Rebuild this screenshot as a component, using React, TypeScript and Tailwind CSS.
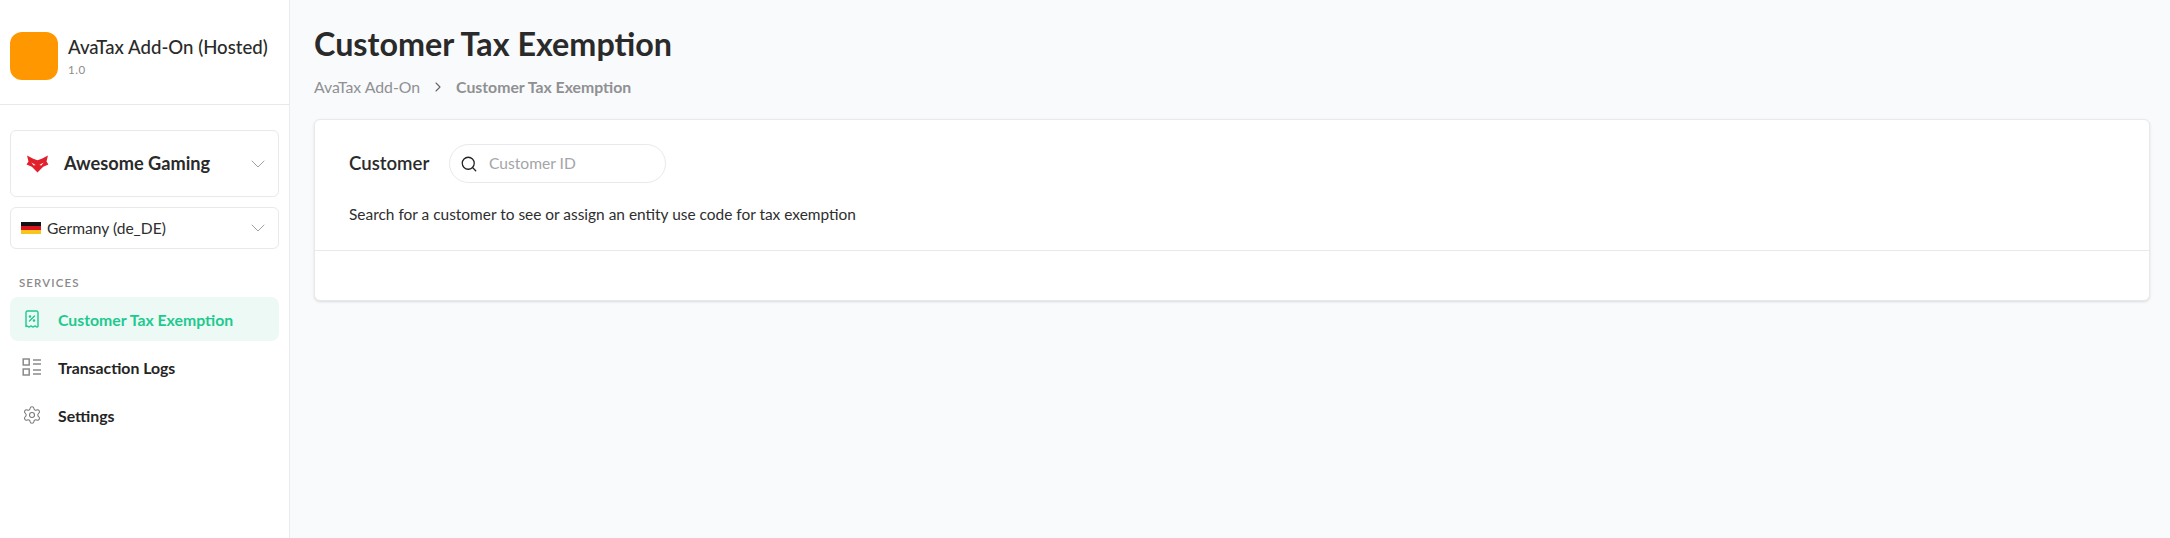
import React from "react";
import { ChevronDown, ChevronRight, Search, Settings } from "lucide-react";

function Fox() {
  return (
    <svg width="23" height="19" viewBox="0 0 24 20" className="shrink-0">
      <path d="M1 1.5 L7.5 5 L12 6.5 L16.5 5 L23 1.5 L21.5 8 L23.5 11 L18 13.5 L12 19.5 L6 13.5 L0.5 11 L2.5 8 Z" fill="#e1202c" />
      <path d="M5.5 9 L10 11.5 L8 12 Z M18.5 9 L14 11.5 L16 12 Z" fill="#fff" />
    </svg>
  );
}

function Flag() {
  return (
    <div className="flex h-[13px] w-[20px] shrink-0 flex-col">
      <div className="h-1/3 bg-[#111]" />
      <div className="h-1/3 bg-[#d8141c]" />
      <div className="h-1/3 bg-[#f7c51e]" />
    </div>
  );
}

function ReceiptIcon() {
  return (
    <svg width="16" height="18" viewBox="0 0 16 18" fill="none" stroke="#1ec98f" strokeWidth="1.4" strokeLinecap="round" strokeLinejoin="round">
      <path d="M2 16.5V2.5a1.5 1.5 0 0 1 1.5-1.5h9A1.5 1.5 0 0 1 14 2.5v14q-1 1-2 0t-2 0-2 0-2 0-2 0-2 0z" />
      <path d="M5.5 11 10.5 6" />
      <circle cx="6" cy="6.5" r=".6" />
      <circle cx="10" cy="10.5" r=".6" />
    </svg>
  );
}

function ListIcon() {
  return (
    <svg width="20" height="20" viewBox="0 0 20 20" fill="none" stroke="#8a8a8a" strokeWidth="1.5">
      <rect x="1.2" y="2" width="6" height="6" />
      <rect x="1.2" y="12" width="6" height="6" />
      <path d="M11 3h8M11 7h8M11 13h8M11 17h8" />
    </svg>
  );
}

function NavItem({ icon, label, active }: { icon: React.ReactNode; label: string; active?: boolean }) {
  return (
    <div className={`flex h-[44px] items-center rounded-lg ${active ? "bg-[#ecf9f5] text-[#1ec98f]" : "text-[#242424]"}`}>
      <div className="flex w-[48px] shrink-0 justify-center pr-[5px]">{icon}</div>
      <span className="pt-[1px] text-[15.8px] font-bold">{label}</span>
    </div>
  );
}

export default function App() {
  return (
    <div className="flex h-[538px] w-[2170px] overflow-hidden bg-[#f9fafc] font-['Lato',sans-serif] text-[#242424]">
      <aside className="flex w-[290px] shrink-0 flex-col border-r border-[#eaebee] bg-white">
        <header className="flex h-[105px] shrink-0 items-center gap-[10px] border-b border-[#e8e9ec] pl-[10px] pt-[7px]">
          <div className="h-[48px] w-[48px] shrink-0 rounded-xl bg-[#ff9800]" />
          <div className="flex flex-col">
            <span className="text-[18.6px] leading-[24px] font-medium whitespace-nowrap text-[#2a2a2a]">AvaTax Add-On (Hosted)</span>
            <span className="mt-[4px] text-[11.5px] leading-[14px] tracking-[0.5px] text-[#8c8c8c]">1.0</span>
          </div>
        </header>
        <div className="flex flex-col px-[10px] pt-[25px]">
          <div className="flex h-[67px] items-center rounded-md border border-[#e8e9ec] pr-[8px] pl-[15px]">
            <Fox />
            <span className="ml-[15px] flex-1 text-[18.2px] font-bold text-[#2a2a2a]">Awesome Gaming</span>
            <ChevronDown size={24} strokeWidth={0.8} color="#8a8a8a" />
          </div>
          <div className="mt-[10px] flex h-[42px] items-center rounded-md border border-[#e8e9ec] pr-[8px] pl-[10px]">
            <Flag />
            <span className="ml-[6px] flex-1 pt-[1px] text-[15.6px] text-[#2e2e2e]">Germany (de_DE)</span>
            <ChevronDown size={24} strokeWidth={0.8} color="#8a8a8a" />
          </div>
          <div className="mt-[27px] pl-[9px] text-[11.5px] leading-[14px] font-semibold tracking-[1.1px] text-[#8a8a8a]">SERVICES</div>
          <div className="mt-[7px] flex flex-col gap-[4px]">
            <NavItem active icon={<ReceiptIcon />} label="Customer Tax Exemption" />
            <NavItem icon={<ListIcon />} label="Transaction Logs" />
            <NavItem icon={<Settings size={20} strokeWidth={1.3} color="#7a7a7a" />} label="Settings" />
          </div>
        </div>
      </aside>
      <main className="flex min-w-0 flex-1 flex-col pt-[24px] pr-[20px] pl-[24px]">
        <h1 className="text-[32.3px] leading-[40px] font-bold text-[#2a2a2a]">Customer Tax Exemption</h1>
        <div className="mt-[13px] flex h-[20px] items-center text-[15.8px] text-[#8f9092]">
          <span>AvaTax Add-On</span>
          <ChevronRight size={16} strokeWidth={1.6} className="mx-[10px]" color="#666" />
          <span className="font-bold">Customer Tax Exemption</span>
        </div>
        <section className="mt-[22px] flex h-[182px] flex-col rounded-md border border-[#e8e9ec] bg-white shadow-sm">
          <div className="flex h-[131px] shrink-0 flex-col border-b border-[#e8e9ec] pt-[24px] pl-[34px]">
            <div className="flex items-center">
              <span className="w-[100px] text-[18.6px] font-semibold text-[#2a2a2a]">Customer</span>
              <div className="flex h-[39px] w-[217px] items-center rounded-full border border-[#e8e9ec] pl-[10px]">
                <Search size={18} strokeWidth={1.7} color="#222" />
                <span className="ml-[11px] text-[15.6px] text-[#a3a5a8]">Customer ID</span>
              </div>
            </div>
            <p className="mt-[21px] text-[15.45px] leading-[20px] text-[#2e2e2e]">Search for a customer to see or assign an entity use code for tax exemption</p>
          </div>
        </section>
      </main>
    </div>
  );
}
